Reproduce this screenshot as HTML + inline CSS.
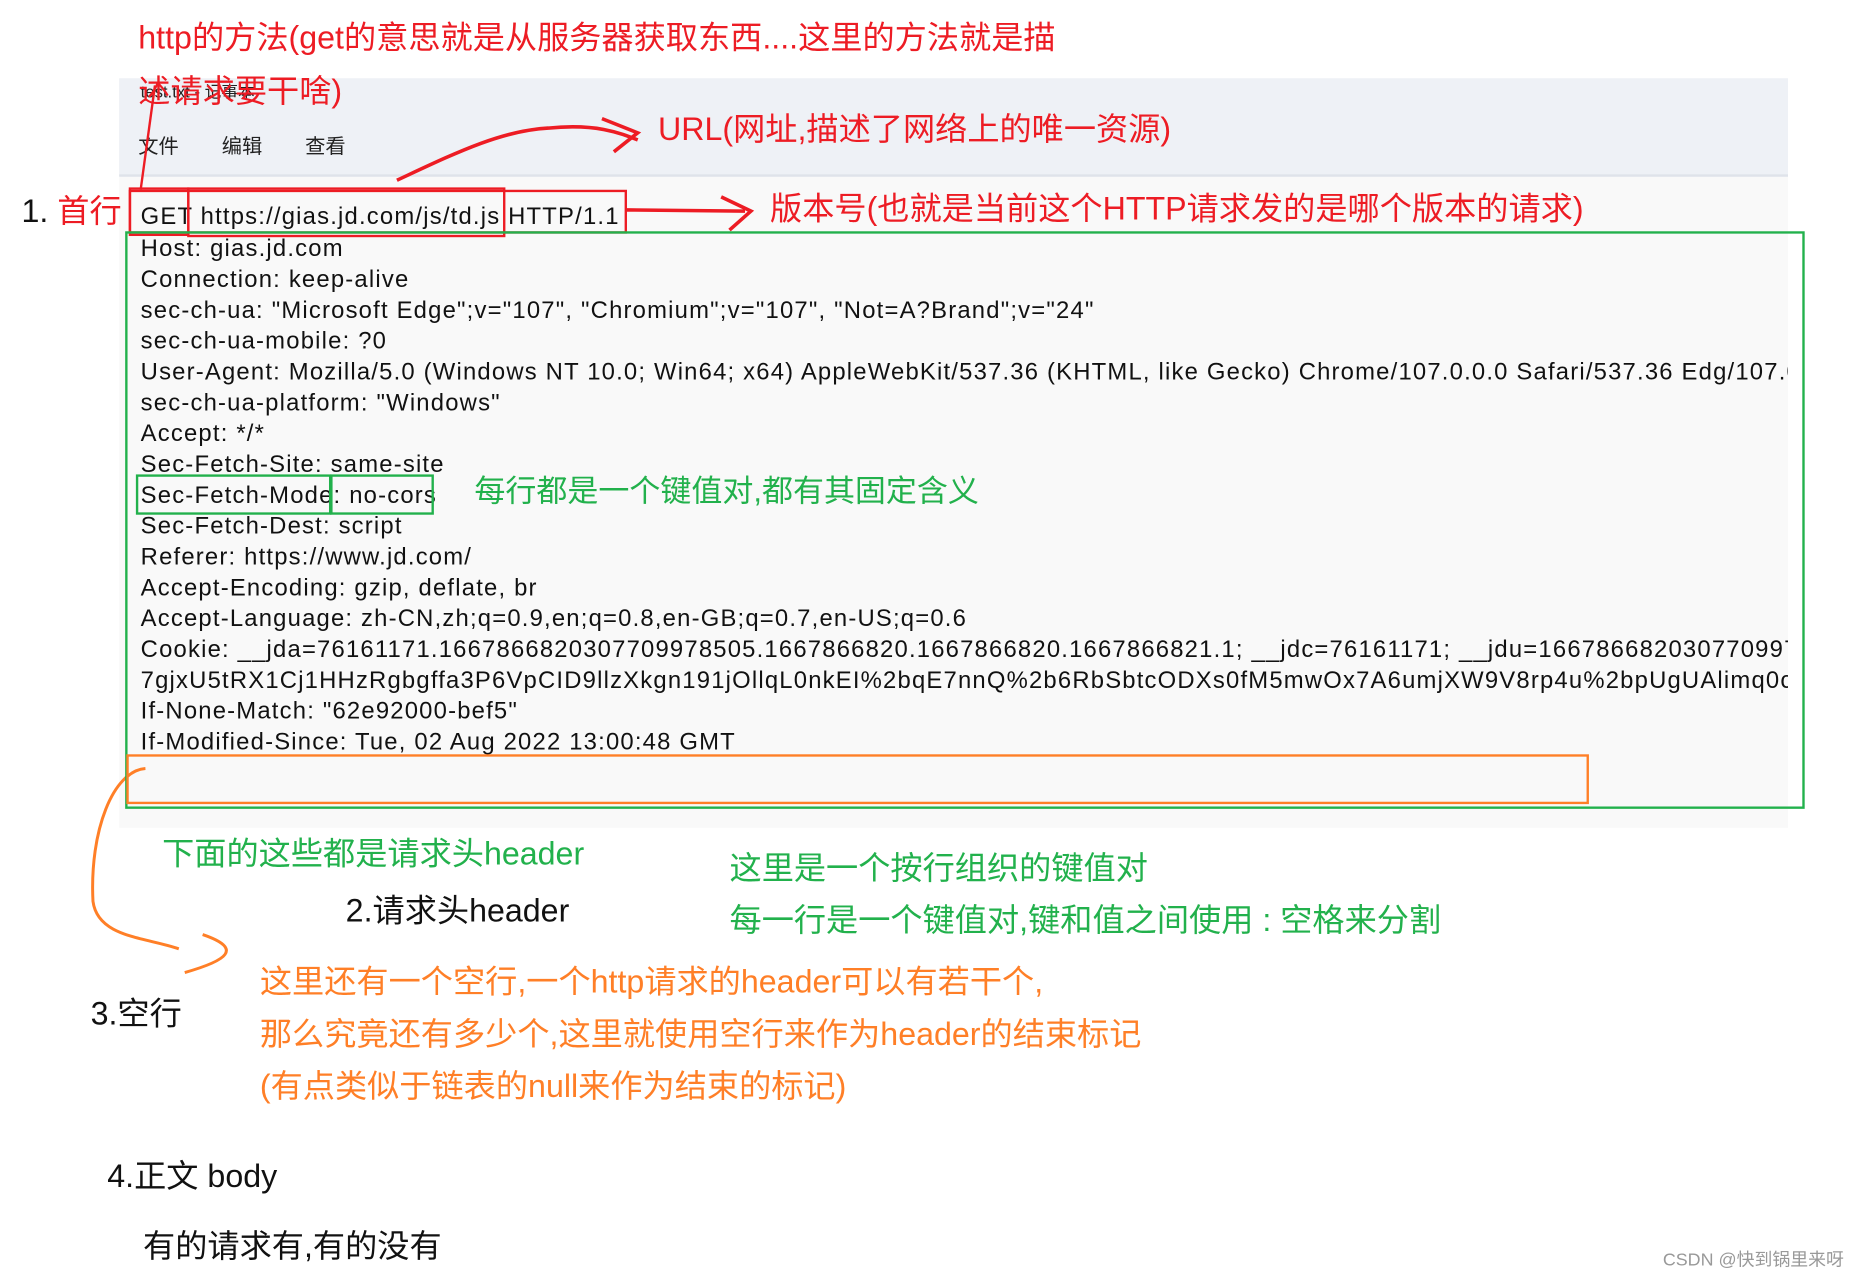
<!DOCTYPE html>
<html><head><meta charset="utf-8"><style>
html,body{margin:0;padding:0;background:#fff;overflow:hidden;width:1863px;height:1281px}
#w{position:absolute;left:0;top:0;width:1563px;height:1080px;transform-origin:0 0;transform:scale(1.192,1.186);font-family:"Liberation Sans","Noto Sans CJK SC",sans-serif}
.a{position:absolute;white-space:nowrap;line-height:1}
.r{color:#ed1c24}.g{color:#22b14c}.o{color:#ff7f27}.k{color:#111}
.t{font-size:27px}
#np{position:absolute;left:100px;top:66px;width:1400px;height:632px;background:#f9f9f9}
#bar{position:absolute;left:0;top:0;width:1400px;height:81px;background:#eef1f6;border-bottom:2px solid #dfe3ea}
.ln{position:absolute;left:18px;font-size:20px;letter-spacing:1px;color:#111;white-space:nowrap;width:1382px;overflow:hidden;line-height:26px}
.bx{position:absolute;border-style:solid;box-sizing:border-box}
</style></head><body><div id="w">
<div id="np"><div id="bar">
<div class="a" style="left:18px;top:4px;font-size:14px;color:#222">test.txt - 记事本</div>
<div class="a" style="left:16px;top:49px;font-size:17px;color:#222">文件</div>
<div class="a" style="left:86px;top:49px;font-size:17px;color:#222">编辑</div>
<div class="a" style="left:156px;top:49px;font-size:17px;color:#222">查看</div>
</div>
<div class="ln" style="top:104px">GET https://gias.jd.com/js/td.js HTTP/1.1</div>
<div class="ln" style="top:131px">Host: gias.jd.com</div>
<div class="ln" style="top:157px">Connection: keep-alive</div>
<div class="ln" style="top:183px">sec-ch-ua: "Microsoft Edge";v="107", "Chromium";v="107", "Not=A?Brand";v="24"</div>
<div class="ln" style="top:209px">sec-ch-ua-mobile: ?0</div>
<div class="ln" style="top:235px">User-Agent: Mozilla/5.0 (Windows NT 10.0; Win64; x64) AppleWebKit/537.36 (KHTML, like Gecko) Chrome/107.0.0.0 Safari/537.36 Edg/107.0.1418.35</div>
<div class="ln" style="top:261px">sec-ch-ua-platform: "Windows"</div>
<div class="ln" style="top:287px">Accept: */*</div>
<div class="ln" style="top:313px">Sec-Fetch-Site: same-site</div>
<div class="ln" style="top:339px">Sec-Fetch-Mode: no-cors</div>
<div class="ln" style="top:365px">Sec-Fetch-Dest: script</div>
<div class="ln" style="top:391px">Referer: https://www.jd.com/</div>
<div class="ln" style="top:417px">Accept-Encoding: gzip, deflate, br</div>
<div class="ln" style="top:443px">Accept-Language: zh-CN,zh;q=0.9,en;q=0.8,en-GB;q=0.7,en-US;q=0.6</div>
<div class="ln" style="top:469px">Cookie: __jda=76161171.1667866820307709978505.1667866820.1667866820.1667866821.1; __jdc=76161171; __jdu=1667866820307709978505</div>
<div class="ln" style="top:495px">7gjxU5tRX1Cj1HHzRgbgffa3P6VpCID9llzXkgn191jOllqL0nkEI%2bqE7nnQ%2b6RbSbtcODXs0fM5mwOx7A6umjXW9V8rp4u%2bpUgUAlimq0cdg</div>
<div class="ln" style="top:521px">If-None-Match: "62e92000-bef5"</div>
<div class="ln" style="top:547px">If-Modified-Since: Tue, 02 Aug 2022 13:00:48 GMT</div>
</div>

<div class="a r t" style="left:116px;top:19px">http的方法(get的意思就是从服务器获取东西....这里的方法就是描</div>
<div class="a r t" style="left:116px;top:64px">述请求要干啥)</div>
<div class="a r t" style="left:552px;top:96px">URL(网址,描述了网络上的唯一资源)</div>
<div class="a t" style="left:18px;top:165px"><span class="k">1.</span> <span class="r">首行</span></div>
<div class="a r t" style="left:646px;top:163px">版本号(也就是当前这个HTTP请求发的是哪个版本的请求)</div>
<div class="bx" style="left:108px;top:158px;width:51px;height:41px;border-width:2px;border-color:#ed1c24"></div>
<div class="bx" style="left:157px;top:158px;width:267px;height:42px;border-width:2px;border-color:#ed1c24"></div>
<div class="bx" style="left:108px;top:160px;width:418px;height:37px;border-width:2px;border-color:#ed1c24"></div>
<svg class="a" style="left:0;top:0" width="1563" height="1080" fill="none">
<path d="M118 160 L130 72" stroke="#ed1c24" stroke-width="2"/>
<path d="M333 152 C380 130 420 110 460 108 C500 104 520 112 535 118 M505 100 L535 112 L515 128" stroke="#ed1c24" stroke-width="3"/>
<path d="M526 177 L625 178 M605 166 L630 178 L612 194" stroke="#ed1c24" stroke-width="3"/>
<path d="M122 648 C95 650 75 700 78 760 C82 790 120 790 150 800 M170 788 C205 800 190 810 155 820" stroke="#ff7f27" stroke-width="2.5"/>
</svg>
<div class="bx" style="left:105px;top:195px;width:1409px;height:487px;border-width:2px;border-color:#22b14c"></div>
<div class="bx" style="left:114px;top:400px;width:164px;height:34px;border-width:2px;border-color:#22b14c"></div>
<div class="bx" style="left:277px;top:400px;width:87px;height:34px;border-width:2px;border-color:#22b14c"></div>
<div class="a g" style="left:398px;top:401px;font-size:26px">每行都是一个键值对,都有其固定含义</div>
<div class="bx" style="left:106px;top:636px;width:1227px;height:42px;border-width:2px;border-color:#ff7f27"></div>
<div class="a g t" style="left:136px;top:707px">下面的这些都是请求头header</div>
<div class="a k t" style="left:290px;top:755px">2.请求头header</div>
<div class="a g t" style="left:612px;top:719px">这里是一个按行组织的键值对</div>
<div class="a g t" style="left:612px;top:763px">每一行是一个键值对,键和值之间使用 : 空格来分割</div>
<div class="a k t" style="left:76px;top:842px">3.空行</div>
<div class="a o t" style="left:218px;top:815px">这里还有一个空行,一个http请求的header可以有若干个,</div>
<div class="a o t" style="left:218px;top:859px">那么究竟还有多少个,这里就使用空行来作为header的结束标记</div>
<div class="a o t" style="left:218px;top:903px">(有点类似于链表的null来作为结束的标记)</div>
<div class="a k t" style="left:90px;top:979px">4.正文 body</div>
<div class="a k t" style="left:120px;top:1038px">有的请求有,有的没有</div>
<div class="a" style="left:1395px;top:1055px;font-size:15px;color:#999">CSDN @快到锅里来呀</div>
</div></body></html>
